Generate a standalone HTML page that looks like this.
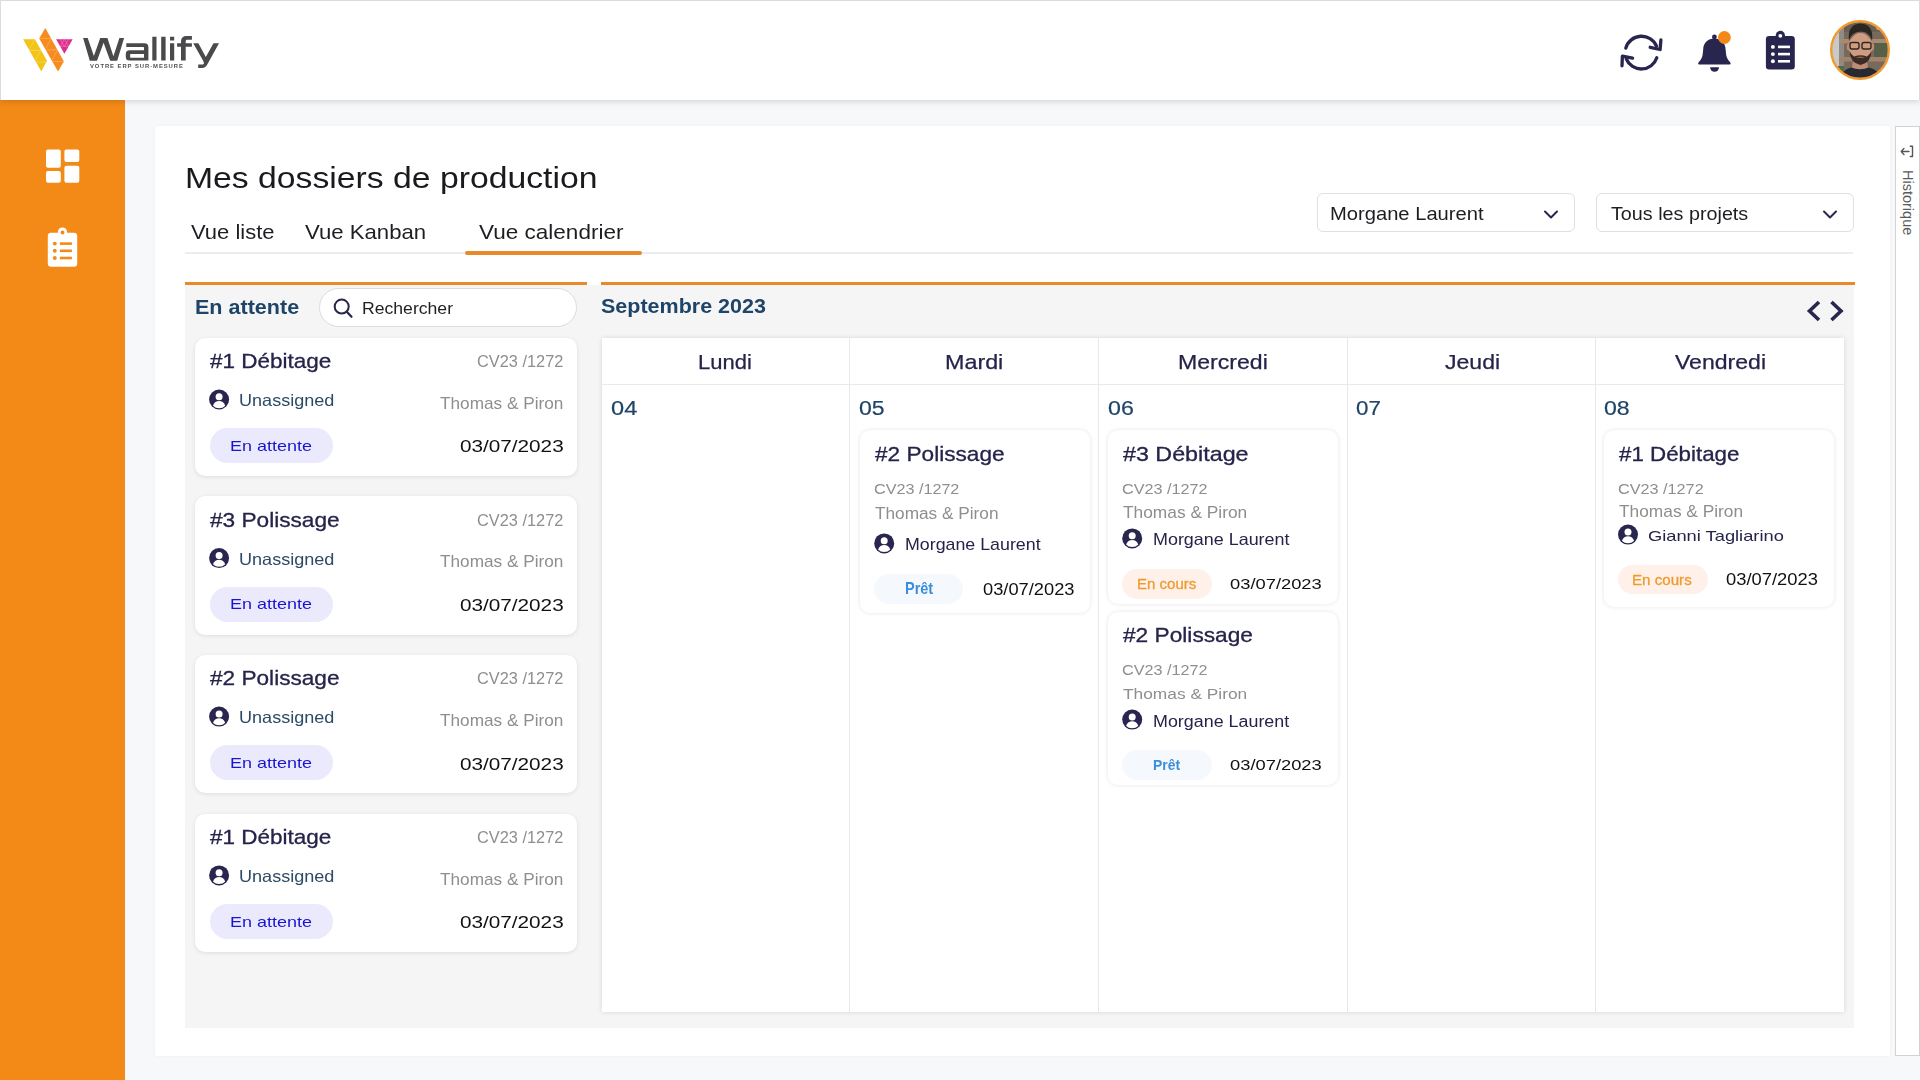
<!DOCTYPE html>
<html><head><meta charset="utf-8"><style>
html,body{margin:0;padding:0;width:1920px;height:1080px;overflow:hidden;background:#F7F8FA;font-family:'Liberation Sans', sans-serif;}
</style></head><body>
<div style="position:absolute;left:0px;top:100px;width:125px;height:980px;background:#F38A18"></div>
<div style="position:absolute;left:155px;top:125.5px;width:1735px;height:930.5px;background:#fff;border-radius:2px;box-shadow:0 0 3px rgba(0,0,0,0.05)"></div>
<div style="position:absolute;left:1895px;top:126px;width:25px;height:930px;background:#fff;border:1px solid #D2D2D2;box-sizing:border-box"></div>
<div style="position:absolute;left:0px;top:0px;width:1920px;height:100px;background:#fff;border:1px solid #DCDCDC;border-bottom:none;box-sizing:border-box;box-shadow:0 2px 6px rgba(0,0,0,0.14);z-index:2"></div>
<div style="position:absolute;left:185px;top:252px;width:1668px;height:2px;background:#EDEDF1"></div>
<div style="position:absolute;left:464.5px;top:251px;width:177px;height:3.5px;background:#E8892A;border-radius:2px"></div>
<div style="position:absolute;left:1316.5px;top:193.3px;width:258.2px;height:39.2px;background:#fff;border:1px solid #DFDFE4;border-radius:6px;box-sizing:border-box"></div>
<div style="position:absolute;left:1595.5px;top:193.3px;width:258.2px;height:39.2px;background:#fff;border:1px solid #DFDFE4;border-radius:6px;box-sizing:border-box"></div>
<div style="position:absolute;left:185px;top:285px;width:1669px;height:743px;background:#F5F5F5"></div>
<div style="position:absolute;left:185px;top:282px;width:402.4px;height:3px;background:#E8892A"></div>
<div style="position:absolute;left:601px;top:282px;width:1253.6px;height:3px;background:#E8892A"></div>
<div style="position:absolute;left:318.5px;top:288.2px;width:258.5px;height:39.3px;background:#fff;border:1px solid #DCDCDC;border-radius:20px;box-sizing:border-box"></div>
<div style="position:absolute;left:195px;top:337.7px;width:382px;height:138.3px;background:#fff;border-radius:10px;box-shadow:0 1px 4px rgba(0,0,0,0.10)"></div>
<div style="position:absolute;left:209.5px;top:427.9px;width:123px;height:35px;background:#EBEAFC;border-radius:18px"></div>
<div style="position:absolute;left:195px;top:496.3px;width:382px;height:138.3px;background:#fff;border-radius:10px;box-shadow:0 1px 4px rgba(0,0,0,0.10)"></div>
<div style="position:absolute;left:209.5px;top:586.5px;width:123px;height:35px;background:#EBEAFC;border-radius:18px"></div>
<div style="position:absolute;left:195px;top:654.8px;width:382px;height:138.3px;background:#fff;border-radius:10px;box-shadow:0 1px 4px rgba(0,0,0,0.10)"></div>
<div style="position:absolute;left:209.5px;top:745.0px;width:123px;height:35px;background:#EBEAFC;border-radius:18px"></div>
<div style="position:absolute;left:195px;top:813.6px;width:382px;height:138.3px;background:#fff;border-radius:10px;box-shadow:0 1px 4px rgba(0,0,0,0.10)"></div>
<div style="position:absolute;left:209.5px;top:903.8000000000001px;width:123px;height:35px;background:#EBEAFC;border-radius:18px"></div>
<div style="position:absolute;left:601.5px;top:338px;width:1242.5px;height:674.2px;background:#fff;box-shadow:0 0 5px rgba(0,0,0,0.13)"></div>
<div style="position:absolute;left:601.5px;top:383.5px;width:1242.5px;height:1px;background:#EAEAEA"></div>
<div style="position:absolute;left:849.3px;top:338px;width:1px;height:674.2px;background:#E8E8E8"></div>
<div style="position:absolute;left:1098px;top:338px;width:1px;height:674.2px;background:#E8E8E8"></div>
<div style="position:absolute;left:1346.7px;top:338px;width:1px;height:674.2px;background:#E8E8E8"></div>
<div style="position:absolute;left:1595px;top:338px;width:1px;height:674.2px;background:#E8E8E8"></div>
<div style="position:absolute;left:860.2px;top:430.2px;width:230px;height:182.4px;background:#fff;border-radius:10px;box-shadow:0 0 4px rgba(0,0,0,0.11)"></div>
<div style="position:absolute;left:1107.8px;top:430.2px;width:230.2px;height:174.1px;background:#fff;border-radius:10px;box-shadow:0 0 4px rgba(0,0,0,0.11)"></div>
<div style="position:absolute;left:1107.8px;top:612px;width:230.2px;height:173.2px;background:#fff;border-radius:10px;box-shadow:0 0 4px rgba(0,0,0,0.11)"></div>
<div style="position:absolute;left:1603.9px;top:430.2px;width:230px;height:176.8px;background:#fff;border-radius:10px;box-shadow:0 0 4px rgba(0,0,0,0.11)"></div>
<div style="position:absolute;left:874px;top:574px;width:89.3px;height:30px;background:#F5F9FE;border-radius:15px"></div>
<div style="position:absolute;left:1122.2px;top:569px;width:89.8px;height:29.7px;background:#FFF1EA;border-radius:15px"></div>
<div style="position:absolute;left:1122.2px;top:750px;width:89.8px;height:30px;background:#F5F9FE;border-radius:15px"></div>
<div style="position:absolute;left:1618px;top:565.4px;width:89.6px;height:29px;background:#FFF1EA;border-radius:15px"></div>
<div style="position:absolute;left:184.75px;top:162.80px;font-size:29.942px;line-height:29.942px;font-weight:400;color:#1A1A1E;white-space:nowrap;transform:scaleX(1.1268);transform-origin:0 0;">Mes dossiers de production</div>
<div style="position:absolute;left:190.60px;top:221.80px;font-size:20.058px;line-height:20.058px;font-weight:400;color:#1E1E22;white-space:nowrap;transform:scaleX(1.0960);transform-origin:0 0;">Vue liste</div>
<div style="position:absolute;left:305.30px;top:221.80px;font-size:20.058px;line-height:20.058px;font-weight:400;color:#1E1E22;white-space:nowrap;transform:scaleX(1.1055);transform-origin:0 0;">Vue Kanban</div>
<div style="position:absolute;left:478.50px;top:221.90px;font-size:20.203px;line-height:20.203px;font-weight:400;color:#1E1E22;white-space:nowrap;transform:scaleX(1.1163);transform-origin:0 0;">Vue calendrier</div>
<div style="position:absolute;left:1330.48px;top:205.00px;font-size:18.023px;line-height:18.023px;font-weight:400;color:#1E1E22;white-space:nowrap;transform:scaleX(1.1191);transform-origin:0 0;">Morgane Laurent</div>
<div style="position:absolute;left:1611.10px;top:205.00px;font-size:18.314px;line-height:18.314px;font-weight:400;color:#1E1E22;white-space:nowrap;transform:scaleX(1.0795);transform-origin:0 0;">Tous les projets</div>
<div style="position:absolute;left:194.83px;top:297.00px;font-size:20.058px;line-height:20.058px;font-weight:700;color:#1E4468;white-space:nowrap;transform:scaleX(1.0747);transform-origin:0 0;">En attente</div>
<div style="position:absolute;left:362.49px;top:300.70px;font-size:15.843px;line-height:15.843px;font-weight:400;color:#222226;white-space:nowrap;transform:scaleX(1.1123);transform-origin:0 0;">Rechercher</div>
<div style="position:absolute;left:600.90px;top:297.40px;font-size:19.580px;line-height:19.580px;font-weight:700;color:#1E4468;white-space:nowrap;transform:scaleX(1.0980);transform-origin:0 0;">Septembre 2023</div>
<div style="position:absolute;left:698.45px;top:352.00px;font-size:20.930px;line-height:20.930px;font-weight:400;color:#25234A;white-space:nowrap;transform:scaleX(1.0510);transform-origin:0 0;-webkit-text-stroke:0.25px #25234A;">Lundi</div>
<div style="position:absolute;left:945.39px;top:352.00px;font-size:20.930px;line-height:20.930px;font-weight:400;color:#25234A;white-space:nowrap;transform:scaleX(1.1140);transform-origin:0 0;-webkit-text-stroke:0.25px #25234A;">Mardi</div>
<div style="position:absolute;left:1178.30px;top:352.00px;font-size:20.930px;line-height:20.930px;font-weight:400;color:#25234A;white-space:nowrap;transform:scaleX(1.1038);transform-origin:0 0;-webkit-text-stroke:0.25px #25234A;">Mercredi</div>
<div style="position:absolute;left:1444.80px;top:352.00px;font-size:20.930px;line-height:20.930px;font-weight:400;color:#25234A;white-space:nowrap;transform:scaleX(1.1020);transform-origin:0 0;-webkit-text-stroke:0.25px #25234A;">Jeudi</div>
<div style="position:absolute;left:1674.50px;top:352.00px;font-size:20.930px;line-height:20.930px;font-weight:400;color:#25234A;white-space:nowrap;transform:scaleX(1.1024);transform-origin:0 0;-webkit-text-stroke:0.25px #25234A;">Vendredi</div>
<div style="position:absolute;left:610.54px;top:397.80px;font-size:20.420px;line-height:20.420px;font-weight:400;color:#1F4466;white-space:nowrap;transform:scaleX(1.1571);transform-origin:0 0;-webkit-text-stroke:0.2px #1F4466;">04</div>
<div style="position:absolute;left:859.37px;top:397.80px;font-size:20.420px;line-height:20.420px;font-weight:400;color:#1F4466;white-space:nowrap;transform:scaleX(1.1286);transform-origin:0 0;-webkit-text-stroke:0.2px #1F4466;">05</div>
<div style="position:absolute;left:1107.96px;top:397.80px;font-size:20.420px;line-height:20.420px;font-weight:400;color:#1F4466;white-space:nowrap;transform:scaleX(1.1381);transform-origin:0 0;-webkit-text-stroke:0.2px #1F4466;">06</div>
<div style="position:absolute;left:1356.10px;top:397.80px;font-size:20.420px;line-height:20.420px;font-weight:400;color:#1F4466;white-space:nowrap;transform:scaleX(1.0952);transform-origin:0 0;-webkit-text-stroke:0.2px #1F4466;">07</div>
<div style="position:absolute;left:1604.47px;top:397.80px;font-size:20.420px;line-height:20.420px;font-weight:400;color:#1F4466;white-space:nowrap;transform:scaleX(1.1333);transform-origin:0 0;-webkit-text-stroke:0.2px #1F4466;">08</div>
<div style="position:absolute;left:209.50px;top:350.90px;font-size:20.494px;line-height:20.494px;font-weight:400;color:#25234A;white-space:nowrap;transform:scaleX(1.0982);transform-origin:0 0;-webkit-text-stroke:0.3px #25234A;">#1 Débitage</div>
<div style="position:absolute;left:476.66px;top:354.00px;font-size:15.664px;line-height:15.664px;font-weight:400;color:#8E8E8E;white-space:nowrap;transform:scaleX(1.0444);transform-origin:0 0;">CV23 /1272</div>
<div style="position:absolute;left:239.19px;top:391.90px;font-size:16.279px;line-height:16.279px;font-weight:400;color:#2D4A66;white-space:nowrap;transform:scaleX(1.1107);transform-origin:0 0;">Unassigned</div>
<div style="position:absolute;left:439.50px;top:395.80px;font-size:15.698px;line-height:15.698px;font-weight:400;color:#8E8E8E;white-space:nowrap;transform:scaleX(1.0964);transform-origin:0 0;">Thomas & Piron</div>
<div style="position:absolute;left:229.84px;top:437.70px;font-size:15.552px;line-height:15.552px;font-weight:400;color:#1A14D0;white-space:nowrap;transform:scaleX(1.1565);transform-origin:0 0;">En attente</div>
<div style="position:absolute;left:459.76px;top:439.40px;font-size:16.783px;line-height:16.783px;font-weight:400;color:#111114;white-space:nowrap;transform:scaleX(1.2354);transform-origin:0 0;">03/07/2023</div>
<div style="position:absolute;left:209.50px;top:509.50px;font-size:20.494px;line-height:20.494px;font-weight:400;color:#25234A;white-space:nowrap;transform:scaleX(1.1051);transform-origin:0 0;-webkit-text-stroke:0.3px #25234A;">#3 Polissage</div>
<div style="position:absolute;left:476.66px;top:512.60px;font-size:15.664px;line-height:15.664px;font-weight:400;color:#8E8E8E;white-space:nowrap;transform:scaleX(1.0444);transform-origin:0 0;">CV23 /1272</div>
<div style="position:absolute;left:239.19px;top:550.50px;font-size:16.279px;line-height:16.279px;font-weight:400;color:#2D4A66;white-space:nowrap;transform:scaleX(1.1107);transform-origin:0 0;">Unassigned</div>
<div style="position:absolute;left:439.50px;top:554.40px;font-size:15.698px;line-height:15.698px;font-weight:400;color:#8E8E8E;white-space:nowrap;transform:scaleX(1.0964);transform-origin:0 0;">Thomas & Piron</div>
<div style="position:absolute;left:229.84px;top:596.30px;font-size:15.552px;line-height:15.552px;font-weight:400;color:#1A14D0;white-space:nowrap;transform:scaleX(1.1565);transform-origin:0 0;">En attente</div>
<div style="position:absolute;left:459.76px;top:598.00px;font-size:16.783px;line-height:16.783px;font-weight:400;color:#111114;white-space:nowrap;transform:scaleX(1.2354);transform-origin:0 0;">03/07/2023</div>
<div style="position:absolute;left:209.50px;top:668.00px;font-size:20.494px;line-height:20.494px;font-weight:400;color:#25234A;white-space:nowrap;transform:scaleX(1.1043);transform-origin:0 0;-webkit-text-stroke:0.3px #25234A;">#2 Polissage</div>
<div style="position:absolute;left:476.66px;top:671.10px;font-size:15.664px;line-height:15.664px;font-weight:400;color:#8E8E8E;white-space:nowrap;transform:scaleX(1.0444);transform-origin:0 0;">CV23 /1272</div>
<div style="position:absolute;left:239.19px;top:709.00px;font-size:16.279px;line-height:16.279px;font-weight:400;color:#2D4A66;white-space:nowrap;transform:scaleX(1.1107);transform-origin:0 0;">Unassigned</div>
<div style="position:absolute;left:439.50px;top:712.90px;font-size:15.698px;line-height:15.698px;font-weight:400;color:#8E8E8E;white-space:nowrap;transform:scaleX(1.0964);transform-origin:0 0;">Thomas & Piron</div>
<div style="position:absolute;left:229.84px;top:754.80px;font-size:15.552px;line-height:15.552px;font-weight:400;color:#1A14D0;white-space:nowrap;transform:scaleX(1.1565);transform-origin:0 0;">En attente</div>
<div style="position:absolute;left:459.76px;top:756.50px;font-size:16.783px;line-height:16.783px;font-weight:400;color:#111114;white-space:nowrap;transform:scaleX(1.2354);transform-origin:0 0;">03/07/2023</div>
<div style="position:absolute;left:209.50px;top:826.80px;font-size:20.494px;line-height:20.494px;font-weight:400;color:#25234A;white-space:nowrap;transform:scaleX(1.0982);transform-origin:0 0;-webkit-text-stroke:0.3px #25234A;">#1 Débitage</div>
<div style="position:absolute;left:476.66px;top:829.90px;font-size:15.664px;line-height:15.664px;font-weight:400;color:#8E8E8E;white-space:nowrap;transform:scaleX(1.0444);transform-origin:0 0;">CV23 /1272</div>
<div style="position:absolute;left:239.19px;top:867.80px;font-size:16.279px;line-height:16.279px;font-weight:400;color:#2D4A66;white-space:nowrap;transform:scaleX(1.1107);transform-origin:0 0;">Unassigned</div>
<div style="position:absolute;left:439.50px;top:871.70px;font-size:15.698px;line-height:15.698px;font-weight:400;color:#8E8E8E;white-space:nowrap;transform:scaleX(1.0964);transform-origin:0 0;">Thomas & Piron</div>
<div style="position:absolute;left:229.84px;top:913.60px;font-size:15.552px;line-height:15.552px;font-weight:400;color:#1A14D0;white-space:nowrap;transform:scaleX(1.1565);transform-origin:0 0;">En attente</div>
<div style="position:absolute;left:459.76px;top:915.30px;font-size:16.783px;line-height:16.783px;font-weight:400;color:#111114;white-space:nowrap;transform:scaleX(1.2354);transform-origin:0 0;">03/07/2023</div>
<div style="position:absolute;left:875.00px;top:443.70px;font-size:20.058px;line-height:20.058px;font-weight:400;color:#25234A;white-space:nowrap;transform:scaleX(1.1289);transform-origin:0 0;-webkit-text-stroke:0.3px #25234A;">#2 Polissage</div>
<div style="position:absolute;left:873.92px;top:481.70px;font-size:14.965px;line-height:14.965px;font-weight:400;color:#8E8E8E;white-space:nowrap;transform:scaleX(1.0808);transform-origin:0 0;">CV23 /1272</div>
<div style="position:absolute;left:875.00px;top:506.00px;font-size:15.988px;line-height:15.988px;font-weight:400;color:#8E8E8E;white-space:nowrap;transform:scaleX(1.0789);transform-origin:0 0;">Thomas & Piron</div>
<div style="position:absolute;left:904.55px;top:536.20px;font-size:17.006px;line-height:17.006px;font-weight:400;color:#25234A;white-space:nowrap;transform:scaleX(1.0473);transform-origin:0 0;">Morgane Laurent</div>
<div style="position:absolute;left:904.68px;top:581.00px;font-size:15.698px;line-height:15.698px;font-weight:700;color:#3B8EDB;white-space:nowrap;transform:scaleX(0.9241);transform-origin:0 0;">Prêt</div>
<div style="position:absolute;left:982.61px;top:582.00px;font-size:16.783px;line-height:16.783px;font-weight:400;color:#111114;white-space:nowrap;transform:scaleX(1.0902);transform-origin:0 0;">03/07/2023</div>
<div style="position:absolute;left:1122.60px;top:443.70px;font-size:20.058px;line-height:20.058px;font-weight:400;color:#25234A;white-space:nowrap;transform:scaleX(1.1611);transform-origin:0 0;-webkit-text-stroke:0.3px #25234A;">#3 Débitage</div>
<div style="position:absolute;left:1121.52px;top:481.70px;font-size:14.965px;line-height:14.965px;font-weight:400;color:#8E8E8E;white-space:nowrap;transform:scaleX(1.0821);transform-origin:0 0;">CV23 /1272</div>
<div style="position:absolute;left:1122.60px;top:504.80px;font-size:15.698px;line-height:15.698px;font-weight:400;color:#8E8E8E;white-space:nowrap;transform:scaleX(1.1045);transform-origin:0 0;">Thomas & Piron</div>
<div style="position:absolute;left:1152.63px;top:532.40px;font-size:16.715px;line-height:16.715px;font-weight:400;color:#25234A;white-space:nowrap;transform:scaleX(1.0730);transform-origin:0 0;">Morgane Laurent</div>
<div style="position:absolute;left:1136.96px;top:576.90px;font-size:14.535px;line-height:14.535px;font-weight:400;color:#EE9B2E;white-space:nowrap;transform:scaleX(1.0357);transform-origin:0 0;-webkit-text-stroke:0.3px #EE9B2E;">En cours</div>
<div style="position:absolute;left:1230.32px;top:576.40px;font-size:15.524px;line-height:15.524px;font-weight:400;color:#111114;white-space:nowrap;transform:scaleX(1.1816);transform-origin:0 0;">03/07/2023</div>
<div style="position:absolute;left:1122.60px;top:624.70px;font-size:20.203px;line-height:20.203px;font-weight:400;color:#25234A;white-space:nowrap;transform:scaleX(1.1243);transform-origin:0 0;-webkit-text-stroke:0.3px #25234A;">#2 Polissage</div>
<div style="position:absolute;left:1121.52px;top:662.60px;font-size:14.965px;line-height:14.965px;font-weight:400;color:#8E8E8E;white-space:nowrap;transform:scaleX(1.0821);transform-origin:0 0;">CV23 /1272</div>
<div style="position:absolute;left:1122.60px;top:685.70px;font-size:15.552px;line-height:15.552px;font-weight:400;color:#8E8E8E;white-space:nowrap;transform:scaleX(1.1144);transform-origin:0 0;">Thomas & Piron</div>
<div style="position:absolute;left:1152.61px;top:712.50px;font-size:16.424px;line-height:16.424px;font-weight:400;color:#25234A;white-space:nowrap;transform:scaleX(1.0903);transform-origin:0 0;">Morgane Laurent</div>
<div style="position:absolute;left:1152.76px;top:757.80px;font-size:14.826px;line-height:14.826px;font-weight:700;color:#3B8EDB;white-space:nowrap;transform:scaleX(0.9393);transform-origin:0 0;">Prêt</div>
<div style="position:absolute;left:1230.32px;top:757.40px;font-size:15.524px;line-height:15.524px;font-weight:400;color:#111114;white-space:nowrap;transform:scaleX(1.1816);transform-origin:0 0;">03/07/2023</div>
<div style="position:absolute;left:1618.70px;top:443.70px;font-size:20.058px;line-height:20.058px;font-weight:400;color:#25234A;white-space:nowrap;transform:scaleX(1.1139);transform-origin:0 0;-webkit-text-stroke:0.3px #25234A;">#1 Débitage</div>
<div style="position:absolute;left:1617.62px;top:481.70px;font-size:14.965px;line-height:14.965px;font-weight:400;color:#8E8E8E;white-space:nowrap;transform:scaleX(1.0846);transform-origin:0 0;">CV23 /1272</div>
<div style="position:absolute;left:1618.70px;top:503.90px;font-size:15.698px;line-height:15.698px;font-weight:400;color:#8E8E8E;white-space:nowrap;transform:scaleX(1.1036);transform-origin:0 0;">Thomas & Piron</div>
<div style="position:absolute;left:1648.42px;top:528.30px;font-size:15.524px;line-height:15.524px;font-weight:400;color:#25234A;white-space:nowrap;transform:scaleX(1.1781);transform-origin:0 0;">Gianni Tagliarino</div>
<div style="position:absolute;left:1632.48px;top:572.80px;font-size:14.826px;line-height:14.826px;font-weight:400;color:#EE9B2E;white-space:nowrap;transform:scaleX(1.0211);transform-origin:0 0;-webkit-text-stroke:0.3px #EE9B2E;">En cours</div>
<div style="position:absolute;left:1726.28px;top:571.40px;font-size:16.364px;line-height:16.364px;font-weight:400;color:#111114;white-space:nowrap;transform:scaleX(1.1225);transform-origin:0 0;">03/07/2023</div>
<div style="position:absolute;left:1915px;top:176.5px;width:0;height:0;"><div style="position:absolute;left:0;top:0;transform:rotate(90deg);transform-origin:0 0;font-size:14.5px;line-height:14px;color:#5A5A5A;white-space:nowrap;margin-top:-7px">Historique</div></div>
<svg style="position:absolute;left:0;top:0;z-index:3" width="1920" height="1080" viewBox="0 0 1920 1080"><path d="M23.1,39.2 L34.9,39.2 L47,60.7 L41.3,71.4 Z" fill="#F2C417" stroke="none" stroke-width="0" /><path d="M45.3,28 L39.2,38.6 L58,71.4 L63.9,61.5 Z" fill="#F68B1F" stroke="none" stroke-width="0" /><path d="M56.1,39.2 L72.7,39.2 L64.4,53.7 Z" fill="#DD2E8D" stroke="none" stroke-width="0" /><defs><clipPath id="ly"><path d="M23.1,39.2 L34.9,39.2 L47,60.7 L41.3,71.4 Z"/></clipPath><clipPath id="lo"><path d="M45.3,28 L39.2,38.6 L58,71.4 L63.9,61.5 Z"/></clipPath><clipPath id="lm"><path d="M56.1,39.2 L72.7,39.2 L64.4,53.7 Z"/></clipPath></defs><g clip-path="url(#ly)" stroke="#FFE9A0" stroke-width="0.7" opacity="0.55" fill="none"><path d="M20,50.5 H50 M20,62 H50 M34.9,39.2 L28.5,50.5 M41,50.2 L34.6,61.7 M47,61.7 L40.6,73"/></g><g clip-path="url(#lo)" stroke="#FFD0A0" stroke-width="0.7" opacity="0.55" fill="none"><path d="M35,38.4 H66 M35,49.9 H66 M35,61.5 H66 M51.4,38.4 L45,49.9 M57.6,49.9 L51.2,61.5 M63.9,61.5 L57.5,73"/></g><g clip-path="url(#lm)" stroke="#FFB0D8" stroke-width="0.7" opacity="0.55" fill="none"><path d="M50,46.4 H76 M60.2,39.2 L64.4,46.4 L68.6,39.2 M60.2,46.4 L64.4,39.2 M64.4,39.2 L68.6,46.4"/></g><path d="M83.1,38.1 L87.7,38.1 L93.9,55.9 L100.2,38.1 L107.4,38.1 L113.4,56.2 L119.4,38.1 L124.1,38.1 L117.2,60.7 L110.2,60.7 L103.6,42.7 L97,60.7 L89.8,60.7 Z" fill="#4A4A4C" stroke="none" stroke-width="0" /><path d="M126.3,43.2 L144.5,43.2 Q148.4,43.2 148.4,47.2 L148.4,60.6 L129.5,60.6 Q125.8,60.6 125.8,57 L125.8,53.8 Q125.8,50.2 129.5,50.2 L144,50.2 L144,47.8 Q144,47.1 143.3,47.1 L126.3,47.1 Z M130.2,53.9 L130.2,57.8 L144,57.8 L144,53.9 Z" fill="#4A4A4C" stroke="none" stroke-width="0" fill-rule="evenodd"/><path d="M152.3,36.7 h4.2 v23.9 h-4.2 Z M161.2,36.7 h4.4 v23.9 h-4.4 Z M170,36.7 h4.2 v3.9 h-4.2 Z M170,43.2 h4.2 v17.4 h-4.2 Z" fill="#4A4A4C" stroke="none" stroke-width="0" /><path d="M181,60.6 L181,41.5 Q181,36 186.5,36 L191.9,36 L191.9,39.8 L187,39.8 Q185.7,39.8 185.7,41.2 L185.7,60.6 Z M177.1,43.2 h14.8 v3.6 h-14.8 Z" fill="#4A4A4C" stroke="none" stroke-width="0" /><path d="M193.2,43.2 L198.4,43.2 L205.8,57 L213.5,43.2 L219,43.2 L207,65 Q205.3,68 202,68 L198.2,68 L198.2,64.6 L202.5,64.6 Q203.5,64.6 204,63.5 L203.3,61 Z" fill="#4A4A4C" stroke="none" stroke-width="0" /><path d="M1625.8,48.1 A16.3,16.3 0 0 1 1656.5,46.2" fill="none" stroke="#28254F" stroke-width="3.3" stroke-linecap="round"/><path d="M1660.9,39.8 L1660.1,49.5 L1650.2,47.3" fill="none" stroke="#28254F" stroke-width="3.3" stroke-linecap="round" stroke-linejoin="round"/><path d="M1656.8,57.8 A16.3,16.3 0 0 1 1626.3,59" fill="none" stroke="#28254F" stroke-width="3.3" stroke-linecap="round"/><path d="M1622,65.8 L1622.4,56.1 L1632.6,58.2" fill="none" stroke="#28254F" stroke-width="3.3" stroke-linecap="round" stroke-linejoin="round"/><circle cx="1714.4" cy="37" r="2.4" fill="#28254F"/><path d="M1714.4,38.5 C1708,38.5 1703.2,43 1703.2,49.5 L1702.6,55 C1702.2,58 1700.5,60.3 1698.6,62.2 Q1697.2,64.5 1700,64.5 L1728.8,64.5 Q1731.6,64.5 1730.2,62.2 C1728.3,60.3 1726.6,58 1726.2,55 L1725.6,49.5 C1725.6,43 1720.8,38.5 1714.4,38.5 Z" fill="#28254F" stroke="none" stroke-width="0" /><path d="M1710.1,67.3 L1719,67.3 A4.45,4.45 0 0 1 1710.1,67.3 Z" fill="#28254F" stroke="none" stroke-width="0" /><circle cx="1724.4" cy="37.5" r="6.4" fill="#F38A18"/><rect x="1765.9" y="36.1" width="28.9" height="33.4" rx="3.2" fill="#28254F"/><circle cx="1780.3500000000001" cy="35.4" r="4.6" fill="#28254F"/><circle cx="1780.3500000000001" cy="35.800000000000004" r="1.9" fill="#fff"/><circle cx="1772.9" cy="46.900000000000006" r="1.95" fill="#fff"/><rect x="1778.0" y="45.60000000000001" width="12" height="2.6" fill="#fff"/><circle cx="1772.9" cy="54.1" r="1.95" fill="#fff"/><rect x="1778.0" y="52.800000000000004" width="12" height="2.6" fill="#fff"/><circle cx="1772.9" cy="61.3" r="1.95" fill="#fff"/><rect x="1778.0" y="60.0" width="12" height="2.6" fill="#fff"/><rect x="47.8" y="232.8" width="29.4" height="34" rx="3.2" fill="#fff"/><circle cx="62.5" cy="232.10000000000002" r="4.6" fill="#fff"/><circle cx="62.5" cy="232.5" r="1.9" fill="#F38A18"/><circle cx="54.8" cy="243.60000000000002" r="1.95" fill="#F38A18"/><rect x="59.9" y="242.3" width="12" height="2.6" fill="#F38A18"/><circle cx="54.8" cy="250.8" r="1.95" fill="#F38A18"/><rect x="59.9" y="249.5" width="12" height="2.6" fill="#F38A18"/><circle cx="54.8" cy="258.0" r="1.95" fill="#F38A18"/><rect x="59.9" y="256.7" width="12" height="2.6" fill="#F38A18"/><rect x="46" y="149.4" width="14.8" height="18.4" rx="2" fill="#fff"/><rect x="46" y="171" width="14.8" height="11.8" rx="2" fill="#fff"/><rect x="64.4" y="149.4" width="14.9" height="12.6" rx="2" fill="#fff"/><rect x="64.4" y="165.8" width="14.9" height="17" rx="2" fill="#fff"/><defs><clipPath id="av"><circle cx="1860" cy="50" r="28.8"/></clipPath><filter id="blr" x="-10%" y="-10%" width="120%" height="120%"><feGaussianBlur stdDeviation="0.55"/></filter></defs><g clip-path="url(#av)"><g filter="url(#blr)"><rect x="1828" y="18" width="64" height="64" fill="#77695C"/><rect x="1828" y="18" width="64" height="14" fill="#6A5F55"/><rect x="1828" y="18" width="11" height="64" fill="#C9CAC8"/><rect x="1839" y="18" width="5" height="64" fill="#8E8A84"/><rect x="1839" y="39" width="52" height="4.5" fill="#A98A6C"/><rect x="1839" y="57" width="52" height="4.5" fill="#A2836A"/><rect x="1874" y="43" width="16" height="14" fill="#56604A"/><circle cx="1879" cy="27" r="3" fill="#D8C080"/><rect x="1836" y="66" width="8" height="14" fill="#4E6A48"/><path d="M1838,82 Q1841,70 1851,67.5 Q1860,71 1869,67.5 Q1880,70 1884,82 Z" fill="#262A32"/><path d="M1853,60 L1867,60 L1868,67.5 Q1860,71 1852,67.5 Z" fill="#BE8C72"/><ellipse cx="1848.8" cy="47" rx="2" ry="3.5" fill="#C08A70"/><ellipse cx="1872.2" cy="47" rx="2" ry="3.5" fill="#C08A70"/><ellipse cx="1860.5" cy="47.5" rx="11.5" ry="14.5" fill="#CF9C80"/><path d="M1849,41 Q1847,24 1860.5,23.5 Q1874,24 1872,41 Q1870,32 1861,31.5 Q1851,32 1849,41 Z" fill="#2C2521"/><path d="M1849.5,51 Q1850,63 1860.5,65 Q1871,63 1871.5,51 Q1868,58.5 1860.5,57.5 Q1853,58.5 1849.5,51 Z" fill="#3A2C25"/><path d="M1855,57 Q1860.5,55 1866,57" fill="none" stroke="#3A2C25" stroke-width="1.6"/><rect x="1850" y="42.5" width="9" height="6.5" rx="2" fill="none" stroke="#2E2826" stroke-width="1.4"/><rect x="1862" y="42.5" width="9" height="6.5" rx="2" fill="none" stroke="#2E2826" stroke-width="1.4"/></g></g><circle cx="1860" cy="50" r="28.8" fill="none" stroke="#F09A32" stroke-width="2.4"/><circle cx="341.7" cy="306.6" r="7" fill="none" stroke="#28254F" stroke-width="2"/><path d="M346.8,311.8 L351.5,316.8" fill="none" stroke="#28254F" stroke-width="2.2" stroke-linecap="round"/><path d="M1545,211.5 L1551,217.5 L1557,211.5" fill="none" stroke="#28254F" stroke-width="2" stroke-linecap="round" stroke-linejoin="round"/><path d="M1824,211.5 L1830,217.5 L1836,211.5" fill="none" stroke="#28254F" stroke-width="2" stroke-linecap="round" stroke-linejoin="round"/><path d="M1819,302 L1809.5,311 L1819,320" fill="none" stroke="#28254F" stroke-width="3.6" stroke-linecap="butt" stroke-linejoin="miter"/><path d="M1831.5,302 L1841,311 L1831.5,320" fill="none" stroke="#28254F" stroke-width="3.6" stroke-linecap="butt" stroke-linejoin="miter"/><path d="M1901.3,151.5 L1909,151.5 M1904,148.4 L1901.2,151.5 L1904,154.6" fill="none" stroke="#555" stroke-width="1.4" stroke-linecap="round" stroke-linejoin="round"/><path d="M1910.3,146.3 L1912.5,146.3 L1912.5,156.5 L1910.3,156.5" fill="none" stroke="#555" stroke-width="1.4" stroke-linecap="round" stroke-linejoin="round"/><g transform="translate(209.1,389.5)"><circle cx="10" cy="10" r="10" fill="#28254F"/><circle cx="10" cy="7.3" r="3.5" fill="#fff"/><path d="M3.9,16.2 C5,12.9 7.4,11.6 10,11.6 C12.6,11.6 15,12.9 16.1,16.2 C14.5,17.9 12.4,18.7 10,18.7 C7.6,18.7 5.5,17.9 3.9,16.2 Z" fill="#fff"/></g><g transform="translate(209.1,548.1)"><circle cx="10" cy="10" r="10" fill="#28254F"/><circle cx="10" cy="7.3" r="3.5" fill="#fff"/><path d="M3.9,16.2 C5,12.9 7.4,11.6 10,11.6 C12.6,11.6 15,12.9 16.1,16.2 C14.5,17.9 12.4,18.7 10,18.7 C7.6,18.7 5.5,17.9 3.9,16.2 Z" fill="#fff"/></g><g transform="translate(209.1,706.5999999999999)"><circle cx="10" cy="10" r="10" fill="#28254F"/><circle cx="10" cy="7.3" r="3.5" fill="#fff"/><path d="M3.9,16.2 C5,12.9 7.4,11.6 10,11.6 C12.6,11.6 15,12.9 16.1,16.2 C14.5,17.9 12.4,18.7 10,18.7 C7.6,18.7 5.5,17.9 3.9,16.2 Z" fill="#fff"/></g><g transform="translate(209.1,865.4)"><circle cx="10" cy="10" r="10" fill="#28254F"/><circle cx="10" cy="7.3" r="3.5" fill="#fff"/><path d="M3.9,16.2 C5,12.9 7.4,11.6 10,11.6 C12.6,11.6 15,12.9 16.1,16.2 C14.5,17.9 12.4,18.7 10,18.7 C7.6,18.7 5.5,17.9 3.9,16.2 Z" fill="#fff"/></g><g transform="translate(874.2,533.4)"><circle cx="10" cy="10" r="10" fill="#28254F"/><circle cx="10" cy="7.3" r="3.5" fill="#fff"/><path d="M3.9,16.2 C5,12.9 7.4,11.6 10,11.6 C12.6,11.6 15,12.9 16.1,16.2 C14.5,17.9 12.4,18.7 10,18.7 C7.6,18.7 5.5,17.9 3.9,16.2 Z" fill="#fff"/></g><g transform="translate(1122.2,528.4)"><circle cx="10" cy="10" r="10" fill="#28254F"/><circle cx="10" cy="7.3" r="3.5" fill="#fff"/><path d="M3.9,16.2 C5,12.9 7.4,11.6 10,11.6 C12.6,11.6 15,12.9 16.1,16.2 C14.5,17.9 12.4,18.7 10,18.7 C7.6,18.7 5.5,17.9 3.9,16.2 Z" fill="#fff"/></g><g transform="translate(1122.2,709.6)"><circle cx="10" cy="10" r="10" fill="#28254F"/><circle cx="10" cy="7.3" r="3.5" fill="#fff"/><path d="M3.9,16.2 C5,12.9 7.4,11.6 10,11.6 C12.6,11.6 15,12.9 16.1,16.2 C14.5,17.9 12.4,18.7 10,18.7 C7.6,18.7 5.5,17.9 3.9,16.2 Z" fill="#fff"/></g><g transform="translate(1618,524.6)"><circle cx="10" cy="10" r="10" fill="#28254F"/><circle cx="10" cy="7.3" r="3.5" fill="#fff"/><path d="M3.9,16.2 C5,12.9 7.4,11.6 10,11.6 C12.6,11.6 15,12.9 16.1,16.2 C14.5,17.9 12.4,18.7 10,18.7 C7.6,18.7 5.5,17.9 3.9,16.2 Z" fill="#fff"/></g></svg>
<div style="position:absolute;left:90px;top:64.2px;font-size:5.6px;line-height:5.6px;font-weight:700;color:#505052;white-space:nowrap;letter-spacing:0.9px;z-index:4;transform:scaleX(1.05);transform-origin:0 0">VOTRE ERP SUR-MESURE</div>
</body></html>
